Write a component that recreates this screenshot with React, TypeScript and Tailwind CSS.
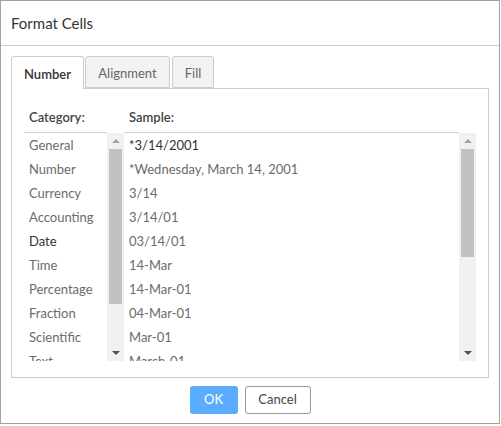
const categories = [
  'General',
  'Number',
  'Currency',
  'Accounting',
  'Date',
  'Time',
  'Percentage',
  'Fraction',
  'Scientific',
  'Text',
]

const samples = [
  '*3/14/2001',
  '*Wednesday, March 14, 2001',
  '3/14',
  '3/14/01',
  '03/14/01',
  '14-Mar',
  '14-Mar-01',
  '04-Mar-01',
  'Mar-01',
  'March-01',
]

function ScrollBar({ thumb }: { thumb: number }) {
  return (
    <div className="mt-px flex h-[228px] w-[17px] flex-col bg-[#f1f1f1]">
      <div className="flex h-[16px] items-center justify-center">
        <div className="h-0 w-0 border-x-[4px] border-b-[4px] border-x-transparent border-b-[#a3a3a3]" />
      </div>
      <div className="mx-[2px] bg-[#c1c1c1]" style={{ height: thumb }} />
      <div className="flex-1" />
      <div className="flex h-[17px] items-center justify-center">
        <div className="h-0 w-0 border-x-[4px] border-t-[4px] border-x-transparent border-t-[#505050]" />
      </div>
    </div>
  )
}

function List({ items, active, width }: { items: string[]; active: number; width: string }) {
  return (
    <div className={`h-[229px] overflow-hidden border-t border-[#cfcfcf] ${width}`}>
      {items.map((item, i) => (
        <div
          key={item}
          className={`h-[24px] pl-[5px] leading-[24px] whitespace-nowrap ${i === active ? 'text-[#333]' : 'text-[#6b6b6b]'}`}
        >
          {item}
        </div>
      ))}
    </div>
  )
}

export default function App() {
  return (
    <div className="min-h-screen bg-white font-['Lato',sans-serif] text-[13px]">
      <div className="flex h-[424px] w-[500px] flex-col border border-[#a3a3a3] bg-white">
        <div className="flex h-[45px] shrink-0 items-center border-b border-[#cccccc] pl-[10px] text-[15px] text-[#333]">
          Format Cells
        </div>

        <div className="px-[10px] pt-[10px]">
          <div className="flex h-[32px] gap-[1px]">
            <div className="relative z-10 flex h-[33px] w-[73px] items-center justify-center rounded-t-[3px] border border-b-0 border-[#cccccc] bg-white pt-[3px] font-semibold text-[#333]">
              Number
            </div>
            <div className="flex h-full w-[85px] items-center justify-center rounded-t-[3px] border border-[#cccccc] bg-[#f2f2f2] pt-[3px] text-[#666]">
              Alignment
            </div>
            <div className="ml-px flex h-full w-[42px] items-center justify-center rounded-t-[3px] border border-[#cccccc] bg-[#f2f2f2] pt-[3px] text-[#666]">
              Fill
            </div>
          </div>

          <div className="flex h-[290px] flex-col border border-[#cccccc] px-[12px] pb-[16px]">
            <div className="flex h-[43px] items-end pb-[5px] font-semibold text-[#444]">
              <div className="w-[100px] pl-[5px]">Category:</div>
              <div className="pl-[5px]">Sample:</div>
            </div>
            <div className="flex">
              <List items={categories} active={4} width="w-[83px]" />
              <ScrollBar thumb={155} />
              <List items={samples} active={0} width="w-[335px]" />
              <ScrollBar thumb={108} />
            </div>
          </div>
        </div>

        <div className="flex justify-center gap-[7px] pt-[8px]">
          <button className="h-[28px] w-[48px] rounded-[3px] bg-[#5aacff] text-white">OK</button>
          <button className="h-[28px] w-[66px] rounded-[3px] border border-[#999] bg-white text-[#444]">
            Cancel
          </button>
        </div>
      </div>
    </div>
  )
}
